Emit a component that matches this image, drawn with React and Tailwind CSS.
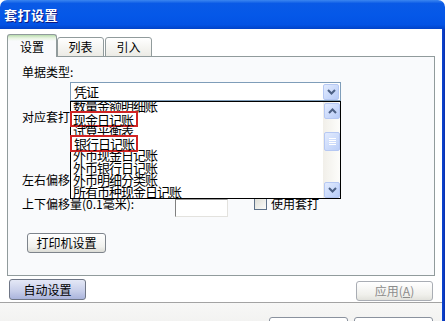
import React from "react";

const items = [
  "数量金额明细账",
  "现金日记账",
  "试算平衡表",
  "银行日记账",
  "外币现金日记账",
  "外币银行日记账",
  "外币明细分类账",
  "所有币种现金日记账",
];

function Chevron({ up }) {
  return (
    <svg width="9" height="6" viewBox="0 0 9 6">
      <polyline
        points={up ? "1,5 4.5,1.5 8,5" : "1,1 4.5,4.5 8,1"}
        fill="none"
        stroke="#4d6185"
        strokeWidth="2"
      />
    </svg>
  );
}

function ArrowBtn({ up }) {
  return (
    <div className="w-[16px] h-[16px] rounded-[2px] border border-[#b6c8f3] bg-[linear-gradient(135deg,#e2ebfe,#b8ccf8)] flex items-center justify-center">
      <Chevron up={up} />
    </div>
  );
}

export default function App() {
  return (
    <div className="w-[445px] h-[321px] overflow-hidden bg-white flex flex-col font-[family-name:'Noto_Sans_CJK_SC','Liberation_Sans',sans-serif] text-black">
      {/* title bar */}
      <div className="h-[29px] shrink-0 rounded-t-[7px] bg-[linear-gradient(to_bottom,#3b86f0_0%,#0a5ae6_12%,#0558e8_50%,#0353e5_85%,#0243c8_100%)] flex items-center pl-[4px]">
        <span className="text-[13px] leading-[14px] font-bold tracking-[0.5px] text-white [text-shadow:1px_1px_#0a1883]">
          套打设置
        </span>
      </div>

      <div className="flex flex-1 min-h-0">
        <div className="flex-1 flex flex-col">
          {/* upper area */}
          <div className="h-[273px] shrink-0 pl-[7px] pt-[5px]">
            {/* tabs */}
            <div className="flex items-end h-[23px] text-[12px] leading-[12px]">
              <div className="relative z-10 w-[50px] h-[23px] rounded-t-[3px] border-x border-t border-[#919b9c] bg-[linear-gradient(to_bottom,#b9dcae_0px,#e6f3e0_3px,#f9fafc_6px)] flex items-center justify-center pt-[2px]">
                设置
              </div>
              <div className="w-[47px] h-[20px] rounded-t-[3px] border border-[#919b9c] bg-[linear-gradient(to_bottom,#ffffff,#ecebe5)] flex items-center justify-center pb-[1px]">
                列表
              </div>
              <div className="ml-[1px] w-[47px] h-[20px] rounded-t-[3px] border border-[#919b9c] bg-[linear-gradient(to_bottom,#ffffff,#ecebe5)] flex items-center justify-center pb-[1px]">
                引入
              </div>
            </div>

            {/* panel */}
            <div className="relative -mt-px w-[428px] h-[220px] border border-[#919b9c] bg-[#f9fafc] pl-[14px] text-[12px] leading-[12px]">
              <div className="pt-[9px]">单据类型:</div>
              <div className="mt-[4px] ml-[48px] w-[271px] h-[19px] border border-[#7f9db9] bg-white flex items-center justify-between pl-[3px] pr-[1px]">
                <span className="text-[13px] leading-[13px] tracking-[-1px]">凭证</span>
                <ArrowBtn />
              </div>
              <div className="mt-[10px]">对应套打</div>
              <div className="mt-[51px]">左右偏移</div>
              <div className="mt-[11px] flex items-start h-[19px]">
                <div className="w-[153px] pt-[1px]">上下偏移量(0.1毫米):</div>
                <div className="mt-[2px] w-[53px] h-[18px] border border-l-[#808080] border-t-[#9a9a9a] border-r-[#e3e2de] border-b-[#e3e2de] bg-white" />
                <div className="ml-[26px] w-[13px] h-[13px] border border-[#5e7189] bg-[linear-gradient(135deg,#dcdcd5,#fbfbf9)]" />
                <div className="ml-[4px] pt-[1px]">使用套打</div>
              </div>
              <div className="mt-[17px] ml-[5px] w-[79px] h-[20px] rounded-[3px] border border-[#7e848c] bg-[linear-gradient(to_bottom,#ffffff,#f1f1ee_70%,#dcdcd6)] flex items-center justify-center">
                打印机设置
              </div>

              {/* open dropdown list */}
              <div className="absolute left-[62px] top-[44px] w-[271px] h-[98px] border border-black bg-white overflow-hidden">
                <div className="-mt-[2px] pl-[2px] text-[13px] leading-[12.35px] tracking-[-1px]">
                  {items.map((t) => (
                    <div key={t} className="h-[12.35px] whitespace-nowrap">
                      {t}
                    </div>
                  ))}
                </div>
                <div className="absolute right-0 top-0 bottom-0 w-[17px] bg-[linear-gradient(to_right,#f1efe9,#fdfdfb)] pl-[1px]">
                  <div className="pt-[1px]">
                    <ArrowBtn up />
                  </div>
                  <div className="mt-[13px] w-[16px] h-[19px] rounded-[2px] border border-[#b6c8f3] bg-[linear-gradient(135deg,#e2ebfe,#bccff8)] flex flex-col items-center justify-center gap-[1px]">
                    <div className="w-[7px] h-px bg-white" />
                    <div className="w-[7px] h-px bg-white" />
                    <div className="w-[7px] h-px bg-white" />
                    <div className="w-[7px] h-px bg-white" />
                  </div>
                  <div className="mt-[31px]">
                    <ArrowBtn />
                  </div>
                </div>
              </div>

              {/* highlight boxes */}
              <div className="absolute left-[62px] top-[54px] w-[68px] h-[16px] border-2 border-[#d02424] bg-white flex items-center pl-[1px] text-[13px] leading-[13px] tracking-[-1px] whitespace-nowrap">
                现金日记账
              </div>
              <div className="absolute left-[62px] top-[78px] w-[68px] h-[17px] border-2 border-[#d02424] bg-white flex items-center pl-[2px] text-[13px] leading-[13px] tracking-[-1px] whitespace-nowrap">
                银行日记账
              </div>
            </div>

            {/* buttons below panel */}
            <div className="mt-[3px] flex items-start justify-between pl-[2px] pr-[9px] text-[12px] leading-[12px]">
              <div className="w-[77px] h-[21px] rounded-[3px] border border-[#6f7686] bg-[linear-gradient(to_bottom,#e4e8f6,#c6cde9_60%,#aab4dc)] flex items-center justify-center">
                自动设置
              </div>
              <div className="mt-[2px] w-[77px] h-[20px] rounded-[3px] border border-[#a9adb4] bg-[linear-gradient(to_bottom,#ffffff,#f0f0ec_70%,#e2e2dc)] flex items-center justify-center text-[#8c8c8c]">
                应用(<span className="underline">A</span>)
              </div>
            </div>
          </div>

          <div className="h-px bg-[#a3a3a3] shrink-0" />

          {/* bottom gray area */}
          <div className="flex-1 bg-[linear-gradient(to_bottom,#f7f7f6,#efefed)] flex justify-end items-start pt-[14px] pr-[9px] gap-[6px]">
            <div className="w-[79px] h-[20px] rounded-t-[3px] border border-[#8a929e] bg-white" />
            <div className="w-[79px] h-[20px] rounded-t-[3px] border border-[#8a929e] bg-white" />
          </div>
        </div>

        {/* right window border */}
        <div className="w-[3px] shrink-0 bg-[linear-gradient(to_right,#0a48d6,#0a2fae)]" />
      </div>
    </div>
  );
}
